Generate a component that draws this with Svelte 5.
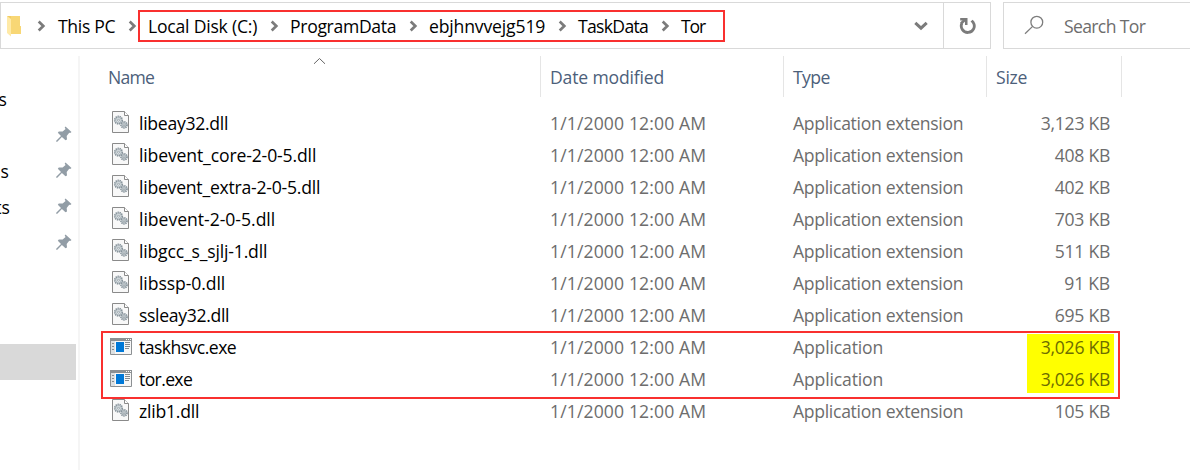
<script>
  const crumbs = [
    { name: 'This PC', x: 58, w: 57 },
    { name: 'Local Disk (C:)', x: 148, w: 109 },
    { name: 'ProgramData', x: 290, w: 106 },
    { name: 'ebjhnvvejg519', x: 429, w: 116 },
    { name: 'TaskData', x: 578, w: 70 },
    { name: 'Tor', x: 681, w: 24 }
  ];
  const arrows = [36, 126.5, 268.5, 407.5, 556.5, 659.5];
  const files = [
    ['libeay32.dll', '3,123 KB', 89],
    ['libevent_core-2-0-5.dll', '408 KB', 177],
    ['libevent_extra-2-0-5.dll', '402 KB', 181],
    ['libevent-2-0-5.dll', '703 KB', 136],
    ['libgcc_s_sjlj-1.dll', '511 KB', 128],
    ['libssp-0.dll', '91 KB', 86],
    ['ssleay32.dll', '695 KB', 90],
    ['taskhsvc.exe', '3,026 KB', 97],
    ['tor.exe', '3,026 KB', 53],
    ['zlib1.dll', '105 KB', 60]
  ].map(([name, size, w]) => ({ name, size, w, app: name.endsWith('.exe') }));
  const side = [
    { t: 's', end: 7, pin: false },
    { t: '', end: 0, pin: true },
    { t: 's', end: 9, pin: true },
    { t: 'ts', end: 10, pin: true },
    { t: '', end: 0, pin: true }
  ];

  // Tracks a label so that its glyph run fills the given width.
  function fit(node, width) {
    const apply = () => {
      node.style.letterSpacing = '0px';
      const n = node.textContent.length;
      node.style.letterSpacing = (width + 0.2 - node.getBoundingClientRect().width) / n + 'px';
    };
    apply();
    document.fonts.ready.then(apply);
  }
</script>

{#snippet chevron()}
  <svg class="chev" width="9" height="12" viewBox="0 0 9 12"><path d="M1.7 1.5 6.3 6 1.7 10.5" fill="none" stroke="#7b7b7b" stroke-width="2.7" /></svg>
{/snippet}

{#snippet gear(cx, cy, r)}
  <circle {cx} {cy} {r} fill="#e4e9ec" stroke="#87939b" stroke-width="1.8" stroke-dasharray="1.3 .7" />
  <circle {cx} {cy} r={r - 1} fill="#dfe5e8" stroke="#98a3a9" stroke-width=".7" />
  <circle {cx} {cy} r="1" fill="#fff" stroke="#87939b" stroke-width=".8" />
{/snippet}

<div class="window">
  <header>
    <div class="address">
      <svg class="folder" width="15" height="22" viewBox="0 0 15 22">
        <path d="M0 1h13v10l1 .5V19H3z" fill="#f2cc64" />
        <path d="M4 1h9v10l1 .5V19H4z" fill="#f8d775" />
        <path d="M0 1 4 4v17.5L0 18z" fill="#ffeaa7" />
      </svg>
      <div class="trail">
        {#each crumbs as c, i}
          <span class="arrow" style:left="{arrows[i]}px">{@render chevron()}</span>
          <span class="crumb" style:left="{c.x - 1}px" use:fit={c.w}>{c.name}</span>
        {/each}
      </div>
      <div class="drop">
        <svg width="14" height="10" viewBox="0 0 14 10"><path d="M1.3 1.8 7 7.2l5.7-5.4" fill="none" stroke="#7b7b7b" stroke-width="3" /></svg>
      </div>
      <div class="refresh">
        <svg width="18" height="18" viewBox="0 0 18 18">
          <path d="M2.9 6.2A6.5 6.5 0 1 0 14.2 5.4L12.6 3.6" fill="none" stroke="#7b7b7b" stroke-width="2.8" />
          <path d="M1.2 1h7.3v7H6V3.4H1.2z" fill="#7b7b7b" />
          <path d="M2 6.5 6.8 2" stroke="#7b7b7b" stroke-width="2.6" />
        </svg>
      </div>
    </div>
    <div class="search">
      <svg width="20" height="20" viewBox="0 0 20 20" fill="none" stroke="#7d7d7d" stroke-width="1.3"><circle cx="12.8" cy="7.2" r="5.9" /><path d="M8.6 11.4 1 18.8" /></svg>
      <span use:fit={81}>Search Tor</span>
    </div>
  </header>

  <main>
    <aside>
      {#each side as s}
        <div class="place">
          <div class="label" style:width="{s.end}px"><span>{s.t}</span></div>
          {#if s.pin}
            <svg class="pin" width="16" height="16" viewBox="0 0 16 16"><path d="M9.5.5 15.5 6l-1.3 1-1-.2-2.5 3.1.3 3.6-1.5.8-3.6-3.3L1.3 15.8H.2v-1.1L5 10 1.8 6.8l1-1.4 3.8.2 3-2.7-.9-1.4z" fill="#929da6" /></svg>
          {/if}
        </div>
      {/each}
      <div class="selected"></div>
    </aside>

    <section>
      <div class="grid head">
        <div class="name"><span use:fit={46}>Name</span>
          <svg class="sort" width="13" height="8" viewBox="0 0 13 8"><path d="m1 6.8 5.5-5.3L12 6.8" fill="none" stroke="#666" /></svg>
        </div>
        <div><span use:fit={114}>Date modified</span></div>
        <div><span use:fit={36.5}>Type</span></div>
        <div><span use:fit={31}>Size</span></div>
      </div>
      <div class="rows">
        {#each files as f}
          <div class="grid row" class:app={f.app}>
            <div class="file">
              <span class="icon">
                {#if f.app}
                  <svg width="22" height="17" viewBox="0 0 22 17">
                    <path fill="#f7f7f7" stroke="#8c9093" d="M.5.5h21v16H.5z" />
                    <path fill="#8c9093" d="M0 0h22v3H0z" />
                    <path fill="#dce0e2" d="M1 3h4v13H1z" />
                    <path fill="#fff" d="M16 1h1v1h-1zm2 0h1v1h-1zm2 0h1v1h-1z" />
                    <path fill="#0078d7" d="M6 4h8v10H6z" />
                    <path stroke="#858b8f" d="M2 5.5h2m-2 3h2m-2 3h2M15 4.5h5m-5 2h5m-5 2h5m-5 2h4" />
                  </svg>
                {:else}
                  <svg class="dll" width="17" height="22" viewBox="0 0 17 22">
                    <path d="M.5.5h12l4 4v17H.5z" fill="#f8f8f8" stroke="#8a8a8a" />
                    <path d="M12.5.5v4h4" fill="#fff" stroke="#8a8a8a" />
                    {@render gear(6.5, 9.2, 3.7)}
                    {@render gear(12, 13.8, 3)}
                  </svg>
                {/if}
              </span>
              <span class="fname" use:fit={f.w}>{f.name}</span>
            </div>
            <div class="cell"><span use:fit={156}>1/1/2000 12:00 AM</span></div>
            <div class="cell"><span use:fit={f.app ? 90 : 170}>{f.app ? 'Application' : 'Application extension'}</span></div>
            <div class="size"><span use:fit={f.size.length === 8 ? 69 : f.size.length === 6 ? 55 : 45.5}>{f.size}</span></div>
          </div>
        {/each}
      </div>
    </section>
  </main>
  <div class="mark path"></div>
  <div class="mark apps"></div>
</div>

<style>
  :global(body) { margin: 0; background: #fff; }
  .window {
    position: relative; width: 1190px; height: 470px; overflow: hidden; background: #fff;
    font: 17.6px/24px "Open Sans", "Noto Sans", sans-serif; color: #000; white-space: nowrap;
  }
  .window * { box-sizing: border-box; }
  svg { display: block; flex: none; }
  header { display: flex; gap: 12px; padding-top: 2px; height: 56px; }
  .address { flex: none; display: flex; width: 991px; height: 47px; border: 1px solid #d9d9d9; }
  .folder { margin: 12px 0 0 6px; }
  .trail { flex: 1; position: relative; margin-left: -21px; }
  .crumb { position: absolute; top: 11px; }
  .arrow { position: absolute; top: 17px; }
  .drop { width: 29px; display: flex; align-items: center; }
  .refresh { width: 47px; border-left: 1px solid #d9d9d9; display: flex; align-items: center; justify-content: center; padding-left: 1px; }
  .search { flex: none; width: 200px; height: 47px; border: 1px solid #d9d9d9; display: flex; align-items: center; padding-left: 20px; gap: 20px; color: #6d6d6d; }
  .search svg { margin-top: -2px; }
  .search span { padding-top: 1px; }
  main { display: flex; height: 414px; }
  aside { width: 80px; border-right: 2px solid #f5f5f5; padding-top: 24px; }
  .place { display: flex; align-items: center; justify-content: space-between; height: 36px; padding-right: 6px; }
  .label { display: flex; justify-content: flex-end; overflow: hidden; padding-top: 1px; }
  .selected { width: 76px; height: 36px; margin-top: 84px; background: #d9d9d9; }
  section { flex: 1; }
  .grid { display: grid; grid-template-columns: 461px 243px 203px 135px; }
  .head { height: 41px; color: #4c607a; }
  .head > div { border-right: 1px solid #e5e5e5; padding: 9px 0 0 9px; }
  .head .name { position: relative; padding-left: 28px; }
  .sort { position: absolute; left: 233px; top: 1px; }
  .rows { padding-top: 10px; }
  .row { height: 32px; align-items: center; }
  .file { display: flex; align-items: center; height: 32px; padding-left: 30px; }
  .icon { width: 29px; height: 32px; padding-top: 7px; }
  .dll { margin: -3px 0 0 2px; }
  .cell { padding-left: 9px; color: #6d6d6d; }
  .size { display: flex; justify-content: flex-end; align-items: center; height: 32px; margin-left: 40px; padding-right: 12px; color: #6d6d6d; }
  .app .size { position: relative; z-index: 0; color: #6d6d00; }
  .app .size::before { content: ""; position: absolute; z-index: -1; left: 0; right: 8px; top: 3px; bottom: 0; background: #ff0; }
  .app + .app .size::before { top: 0; bottom: 2px; }
  .mark { position: absolute; border: 2px solid #f9302f; pointer-events: none; }
  .path { left: 138px; top: 10px; width: 587px; height: 32px; }
  .apps { left: 101px; top: 331px; width: 1019px; height: 68px; }
</style>
